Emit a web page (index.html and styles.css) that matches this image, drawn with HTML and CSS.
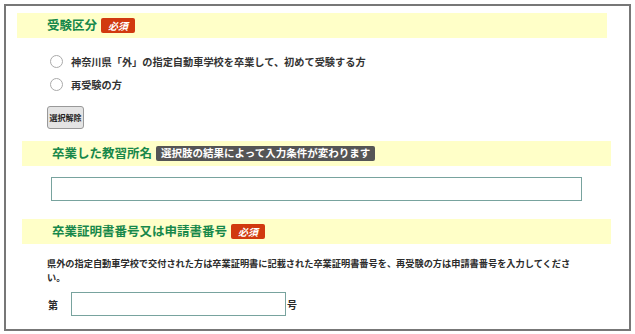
FILE: index.html
```html
<!DOCTYPE html>
<html lang="ja">
<head>
<meta charset="UTF-8">
<title>受験申込</title>
<link rel="stylesheet" href="styles.css">
</head>
<body>
<div class="frame">
  <div class="head first">
    <h2>受験区分</h2><span class="badge req">必須</span>
  </div>
  <div class="radios">
    <label class="radio"><span class="circle"></span>神奈川県「外」の指定自動車学校を卒業して、初めて受験する方</label>
    <label class="radio"><span class="circle"></span>再受験の方</label>
  </div>
  <button class="clear">選択解除</button>

  <div class="head">
    <h2>卒業した教習所名</h2><span class="badge note">選択肢の結果によって入力条件が変わります</span>
  </div>
  <input class="field wide" type="text">

  <div class="head third">
    <h2>卒業証明書番号又は申請書番号</h2><span class="badge req">必須</span>
  </div>
  <p class="desc">県外の指定自動車学校で交付された方は卒業証明書に記載された卒業証明書番号を、再受験の方は申請書番号を入力してください。</p>
  <div class="numrow">
    <span>第</span><input class="field short" type="text"><span>号</span>
  </div>
</div>
</body>
</html>
```

FILE: styles.css
```css
:root {
  --yellow: #ffffc8;
  --green: #17884a;
  --red: #d1390f;
  --line: #78a39e;
}
* { box-sizing: border-box; }
body {
  margin: 0;
  background: #fff;
  font-family: "Noto Sans CJK JP", sans-serif;
  color: #2b2b2b;
}
.frame {
  margin: 4px;
  width: 627px; height: 327px;
  border: 2px solid #777;
  padding-top: 7px;
}
.head {
  height: 25px;
  margin: 0 18px 0 16px;
  padding-left: 30px;
  background: var(--yellow);
  display: flex; align-items: center; gap: 4px;
}
.head.first { margin: 0 22px 0 11px; }
.head.third { margin-top: 18px; }
.head h2 {
  margin: 0;
  font-size: 12.5px; font-weight: bold; line-height: 1;
  color: var(--green);
}
.badge {
  height: 15px;
  display: flex; align-items: center;
  color: #fff; font-weight: bold; line-height: 1;
  border-radius: 2px;
}
.badge.req {
  background: var(--red);
  font-size: 10px; font-style: italic;
  padding: 0 7px;
}
.badge.note {
  background: #555;
  font-size: 10.5px;
  padding: 0 5px;
}
.radios {
  margin: 12px 0 0 44px;
}
.radio {
  height: 23px;
  display: flex; align-items: center; gap: 8px;
  font-size: 10.2px; font-weight: bold; color: #333;
}
.circle {
  width: 13px; height: 13px;
  border: 1px solid #aaa; border-radius: 50%;
  background: #fff;
}
.clear {
  display: block;
  margin: 10px 0 0 41px;
  width: 37px; height: 23px;
  padding: 0;
  background: #e4e4e4;
  border: 1px solid #999; border-radius: 3px;
  font-family: inherit; font-size: 8px; font-weight: bold; color: #222;
}
.clear + .head { margin-top: 12px; }
.field {
  display: block;
  height: 24px;
  border: 1px solid var(--line);
  background: #fff;
}
.field.wide {
  margin: 11px 0 0 45px;
  width: 531px;
}
.desc {
  margin: 12px 0 0 41px;
  width: 535px;
  font-size: 9.2px; font-weight: bold; line-height: 14px; color: #2b2b2b;
}
.numrow {
  margin: 8px 0 0 42px;
  display: flex; align-items: center;
  font-size: 10px; font-weight: bold;
}
.numrow span:first-child { width: 23px; }
.field.short { width: 215px; margin-right: 1px; }
```
